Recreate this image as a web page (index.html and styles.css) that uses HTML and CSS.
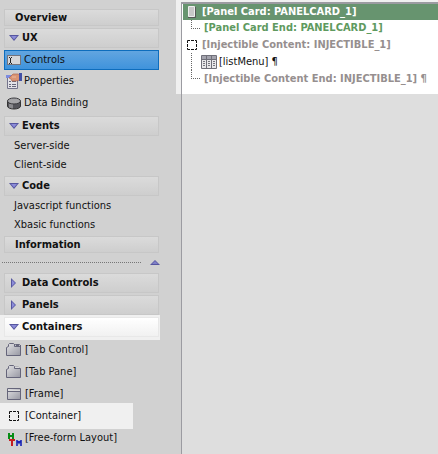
FILE: index.html
```html
<!DOCTYPE html>
<html lang="en">
<head>
<meta charset="utf-8">
<title>UX Controls</title>
<link rel="stylesheet" href="styles.css">
</head>
<body>
<svg class="defs" aria-hidden="true">
  <defs>
    <linearGradient id="metal" x1="0" y1="0" x2="1" y2="1"><stop offset="0" stop-color="#e2e2e4"/><stop offset="1" stop-color="#9697a2"/></linearGradient>
    <symbol id="down" viewBox="0 0 10 6"><path d="M0 0h10L5 6z" fill="#5656a0"/><path d="M2 1h6L5 4.500z" fill="#8c8cd8"/></symbol>
    <symbol id="right" viewBox="0 0 6 10"><path d="M0 0v10l5-5z" fill="#5656a0"/><path d="M1 2v6l3-3z" fill="#8c8cd8"/></symbol>
    <symbol id="box" viewBox="0 0 16 16"><path d="M3.500 6V3.500H6M7 3.500h3M11 3.500h1.500V6M12.500 7v3M12.500 11v1.500H11M10 12.500H7M6 12.500H3.500V11M3.500 10V7" fill="none" stroke="#111"/></symbol>
  </defs>
</svg>
<div class="app">
  <nav class="sidebar">
    <div class="section">
      <button class="head plain">Overview</button>
    </div>
    <div class="section">
      <button class="head"><svg class="arrow"><use href="#down" width="10" height="6" y="2"/></svg>UX</button>
      <button class="item selected"><svg class="icon" viewBox="0 0 16 16"><rect x="1.500" y="3.500" width="13" height="9" fill="#d6d6d8" stroke="#74747c"/><path d="M3 5.500h1m1 0h1M4.500 6v5M3 11.500h1m1 0h1" stroke="#222"/></svg>Controls</button>
      <button class="item"><svg class="icon" viewBox="0 0 16 16"><path d="M1.500 4.500h10v11h-10z" fill="#e2e2e8" stroke="#74748c"/><path d="M0 2h7v3H0z" fill="#7c8be0"/><path d="M3 8.500h2m1 0h4M3 11.500h2m1 0h4M3 13.500h2m1 0h4" stroke="#66667a"/><path d="M3 5l4-4h5l2 1v5l-4 1H6L5 6z" fill="#d99473" stroke="#ae6850" stroke-width=".7"/><path d="M6 4h4" stroke="#f0b99d"/><path d="M13 0h3v8h-3z" fill="#4250a5"/></svg>Properties</button>
      <button class="item"><svg class="icon" viewBox="0 0 16 16"><path d="M1.500 6v5c0 4 13 4 13 0V6z" fill="#55555b" stroke="#333"/><path d="M3 9v3.500l4 1V9z" fill="#8a8a8e"/><ellipse cx="8" cy="6" rx="6.500" ry="3" fill="#a5a5a8" stroke="#3c3c40"/></svg>Data Binding</button>
    </div>
    <div class="section">
      <button class="head"><svg class="arrow"><use href="#down" width="10" height="6" y="2"/></svg>Events</button>
      <button class="item text">Server-side</button>
      <button class="item text">Client-side</button>
    </div>
    <div class="section">
      <button class="head"><svg class="arrow"><use href="#down" width="10" height="6" y="2"/></svg>Code</button>
      <button class="item text">Javascript functions</button>
      <button class="item text">Xbasic functions</button>
    </div>
    <div class="section">
      <button class="head plain">Information</button>
    </div>
    <div class="splitter"><span class="dots"></span><svg class="up" viewBox="0 0 10 5"><path d="M0 5h10L5 0z" fill="#5656a0"/><path d="M2 4h6L5 1z" fill="#8080c8"/></svg></div>
    <div class="section">
      <button class="head"><svg class="arrow"><use href="#right" width="6" height="10" x="2"/></svg>Data Controls</button>
    </div>
    <div class="section">
      <button class="head"><svg class="arrow"><use href="#right" width="6" height="10" x="2"/></svg>Panels</button>
    </div>
    <div class="section">
      <div class="spot"><button class="head bright"><svg class="arrow"><use href="#down" width="10" height="6" y="2"/></svg>Containers</button></div>
      <button class="item tool"><svg class="icon" viewBox="0 0 16 16"><path d="M.500 13.500V5.500l2-1V2.500l1-1h4l1 1v1l1-1h4l1 1v10z" fill="url(#metal)" stroke="#65657a"/><path d="M8.500 2v2.500h6V3M10 3.500h3" fill="none" stroke="#65657a"/></svg>[Tab Control]</button>
      <button class="item tool"><svg class="icon" viewBox="0 0 16 16"><path d="M8.500 4V2.500h4l1 1V5" fill="#d8d8da" stroke="#b4b4ba"/><path d="M.500 13.500V5.500l2-1V2.500l1-1h4l1 1v2h6v9z" fill="url(#metal)" stroke="#65657a"/></svg>[Tab Pane]</button>
      <button class="item tool"><svg class="icon" viewBox="0 0 16 16"><path d="M1.500 2.500h13v11h-13z" fill="url(#metal)" stroke="#65657a"/><path d="M2 4.500h12" stroke="#ddd"/><path d="M2 5.500h12" stroke="#65657a"/></svg>[Frame]</button>
      <button class="item tool lit"><svg class="icon"><use href="#box" width="16" height="16"/></svg>[Container]</button>
      <button class="item tool"><svg class="icon" viewBox="0 0 16 16"><path d="M3 3v6M7 3v6M3 6h4" stroke="#078c16" stroke-width="2"/><path d="M3 10h6M6 10v6" stroke="#c51d20" stroke-width="2"/><path d="M11 10v6M15 10v6M12 11l1 2 1-2" fill="none" stroke="#1420b5" stroke-width="1.600"/></svg>[Free-form Layout]</button>
    </div>
  </nav>
  <main class="canvas">
    <ul class="tree">
      <li class="row active"><svg class="icon" viewBox="0 0 16 16"><path d="M4.500 2.500h6v10h-6z" fill="#c8c8c8" stroke="#eee"/><path d="M4 13.500h7.500V3" fill="none" stroke="#575757"/></svg><span>[Panel Card: PANELCARD_1]</span></li>
      <li class="row end"><span class="elbow"></span><span class="green">[Panel Card End: PANELCARD_1]</span></li>
      <li class="row tall"><svg class="icon"><use href="#box" width="16" height="16"/></svg><span class="grey">[Injectible Content: INJECTIBLE_1]</span></li>
      <li class="row tall child"><span class="line"></span><svg class="icon" viewBox="0 0 16 16"><path d="M.500 1.500h15v13H.500z" fill="#e8e8ea" stroke="#70707a"/><path d="M1 2h14v3H1z" fill="#a4a4ae"/><path d="M0 5.500h16M5.500 2v12M10.500 2v12" stroke="#70707a"/><path d="M2 7.500h2m3 0h2m3 0h2M2 9.500h2m3 0h2m3 0h2M2 11.500h2m3 0h2m3 0h2" stroke="#777780"/></svg><span class="name">[listMenu] ¶</span></li>
      <li class="row tall end"><span class="elbow"></span><span class="grey">[Injectible Content End: INJECTIBLE_1] ¶</span></li>
    </ul>
  </main>
</div>
</body>
</html>
```
FILE: styles.css
```css
* { box-sizing: border-box; }
body {
  margin: 0;
  background: #d1d1d1;
  color: #111;
  font: 11px/16px "DejaVu Sans Condensed", "DejaVu Sans", sans-serif;
}
.defs { position: absolute; width: 0; height: 0; }
.app { display: grid; grid-template-columns: 176px 1fr; min-height: 100vh; }
.sidebar { padding-top: 9px; overflow: hidden; }
button {
  display: flex;
  align-items: center;
  border: 0;
  padding: 0;
  background: none;
  color: inherit;
  font: inherit;
  text-align: left;
  white-space: nowrap;
}
.section { display: flex; flex-direction: column; margin-bottom: 2px; }
.head {
  height: 20px;
  margin: 0 17px 0 4px;
  padding-left: 4px;
  border: 1px solid #c7c7c7;
  background: linear-gradient(#dbdbdb, #cecece);
  font-weight: bold;
}
.plain { height: 17px; padding-left: 10px; }
.arrow { width: 10px; height: 10px; margin-right: 3px; }
.item { height: 22px; margin: 0 17px 0 4px; padding-left: 2px; }
.icon { width: 16px; height: 16px; margin-right: 2px; flex: none; }
.selected { height: 20px; margin-top: 2px; border: 1px solid #0e6dbd; padding-left: 1px; background: linear-gradient(#62a5e0, #3f93dc); }
.text { height: 19px; padding-left: 10px; }
.splitter { display: flex; align-items: center; height: 18px; padding: 0 16px 4px 2px; }
.dots { flex: 1; margin-right: 9px; border-top: 1px dotted #777; }
.up { width: 10px; height: 5px; }
.spot { margin: -2px 16px -1px 0; padding: 2px 0 3px; background: #f0f0f0; }
.bright { width: calc(100% - 5px); margin-right: 0; border-color: #e8e8e8; background: linear-gradient(#fff, #f1f1f1); }
.tool { margin: 0; padding-left: 6px; }
.tool .icon { margin-right: 3px; }
.spot + .tool { position: relative; }
.lit { align-self: flex-start; height: 26px; margin: -2px 0; padding-right: 52px; background: #f0f0f0; }
.canvas { display: flex; flex-direction: column; padding: 2px 0 0 5px; background: linear-gradient(#f0f0f0 94px, #d1d1d1 94px); }
.tree {
  flex: 1;
  margin: 0;
  padding: 0 0 0 1px;
  border: solid #9b9ba1;
  border-width: 2px 0 0 1px;
  background: linear-gradient(#fff 90px, #dedede 90px);
  list-style: none;
}
.row { display: flex; align-items: center; height: 16px; padding-left: 1px; font-weight: bold; white-space: nowrap; }
.tall { height: 17px; }
.active { background: #67946f; color: #fff; }
.green { color: #5f9a5f; }
.grey { color: #968f8f; }
.elbow { align-self: flex-start; width: 9px; height: 9px; margin: 0 4px 0 7px; border: dotted #666; border-width: 0 0 1px 1px; }
.line { align-self: stretch; width: 10px; margin-left: 7px; border-left: 1px dotted #666; }
.name { font-weight: normal; }
```
